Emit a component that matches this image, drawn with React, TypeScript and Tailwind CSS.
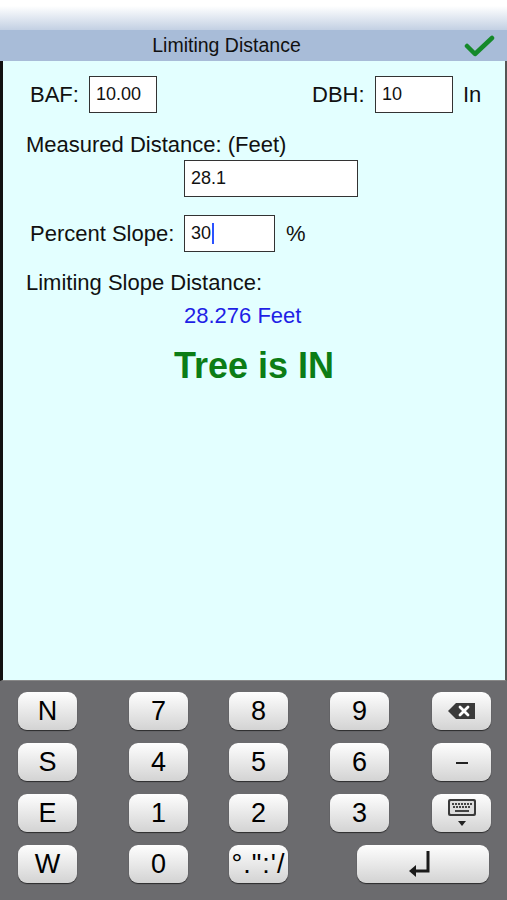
import React from "react";

const keyCls =
  "h-[38px] w-[59px] rounded-[9px] bg-[linear-gradient(#fefefe,#d3d3d3)] shadow-[0_1px_1px_rgba(0,0,0,0.6)] flex items-center justify-center text-[27px] text-black leading-none";

function Key({ children, className = "" }: { children: React.ReactNode; className?: string }) {
  return <div className={`${keyCls} ${className}`}>{children}</div>;
}

export default function App() {
  return (
    <div
      className="w-[507px] h-[900px] flex flex-col overflow-hidden"
      style={{ fontFamily: '"Liberation Sans", Arial, sans-serif' }}
    >
      {/* header */}
      <div className="h-[30px] bg-[linear-gradient(#ffffff,#ffffff_20%,#c3d0e3)]" />
      <div className="h-[31px] bg-[#a8bcd8] flex items-center justify-center pr-[54px] relative">
        <span className="text-[19.5px] text-[#111]">Limiting Distance</span>
        <svg className="absolute left-[464px] top-[5px]" width="31" height="22" viewBox="0 0 31 22">
          <polyline points="3,11 11,19 28,3" fill="none" stroke="#15892a" strokeWidth="4.5" strokeLinecap="round" strokeLinejoin="round" />
        </svg>
      </div>

      {/* content */}
      <div className="flex-1 bg-[#e3ffff] border-l-[3px] border-l-[#111] border-r-[2px] border-r-[#555] border-b border-b-[#888] flex flex-col text-[22px] text-[#111] whitespace-nowrap">
        <div className="flex items-center h-[37px] mt-[15px]">
          <span className="ml-[27px] w-[49px] shrink-0">BAF:</span>
          <div className="ml-[10px] w-[68px] h-[37px] shrink-0 bg-white border border-[#333] flex items-center pl-[6px] text-[18px]">10.00</div>
          <span className="ml-[155px] w-[53px] shrink-0">DBH:</span>
          <div className="ml-[10px] w-[78px] h-[37px] shrink-0 bg-white border border-[#333] flex items-center pl-[6px] text-[18px]">10</div>
          <span className="ml-[10px]">In</span>
        </div>
        <div className="ml-[23px] mt-[20px] leading-[24px]">Measured Distance: (Feet)</div>
        <div className="ml-[181px] mt-[3px] w-[174px] h-[37px] bg-white border border-[#333] flex items-center pl-[6px] text-[18px]">28.1</div>
        <div className="flex items-center h-[37px] mt-[18px]">
          <span className="ml-[27px] w-[142px] shrink-0">Percent Slope:</span>
          <div className="ml-[12px] w-[91px] h-[37px] shrink-0 bg-white border border-[#333] flex items-center pl-[6px] text-[18px]">
            30<span className="inline-block w-[2px] h-[21px] bg-[#2b52ff] ml-[1px]" />
          </div>
          <span className="ml-[11px]">%</span>
        </div>
        <div className="ml-[23px] mt-[19px] leading-[24px]">Limiting Slope Distance:</div>
        <div className="ml-[181px] mt-[9px] leading-[24px] text-[#1f1fe6]">28.276 Feet</div>
        <div className="ml-[171px] mt-[18px] leading-[40px] text-[36px] font-bold text-[#0c7d16]">Tree is IN</div>
      </div>

      {/* keyboard */}
      <div className="h-[219px] bg-[#6b6b6e] pt-[11px] flex flex-col gap-[13px]">
        <div className="flex">
          <Key className="ml-[18px]">N</Key>
          <Key className="ml-[52px]">7</Key>
          <Key className="ml-[41px]">8</Key>
          <Key className="ml-[42px]">9</Key>
          <Key className="ml-[43px]">
            <svg width="30" height="18" viewBox="0 0 30 18">
              <path d="M9 1 H28 V17 H9 L1 9 Z" fill="#3a3a3a" />
              <path d="M13 5 L21 13 M21 5 L13 13" stroke="#fff" strokeWidth="2.8" strokeLinecap="round" />
            </svg>
          </Key>
        </div>
        <div className="flex">
          <Key className="ml-[18px]">S</Key>
          <Key className="ml-[52px]">4</Key>
          <Key className="ml-[41px]">5</Key>
          <Key className="ml-[42px]">6</Key>
          <Key className="ml-[43px]">
            <span className="block w-[12px] h-[2px] bg-[#222] mt-[2px]" />
          </Key>
        </div>
        <div className="flex">
          <Key className="ml-[18px]">E</Key>
          <Key className="ml-[52px]">1</Key>
          <Key className="ml-[41px]">2</Key>
          <Key className="ml-[42px]">3</Key>
          <Key className="ml-[43px]">
            <svg width="32" height="30" viewBox="0 0 32 30">
              <rect x="2" y="1" width="28" height="17" rx="2" fill="#3a3a3a" />
              <rect x="4" y="3" width="24" height="13" rx="1" fill="#ddd" />
              <g fill="#444">
                <rect x="6" y="5" width="2" height="2" />
                <rect x="9" y="5" width="2" height="2" />
                <rect x="12" y="5" width="2" height="2" />
                <rect x="15" y="5" width="2" height="2" />
                <rect x="18" y="5" width="2" height="2" />
                <rect x="21" y="5" width="2" height="2" />
                <rect x="24" y="5" width="2" height="2" />
                <rect x="7" y="8" width="2" height="2" />
                <rect x="10" y="8" width="2" height="2" />
                <rect x="13" y="8" width="2" height="2" />
                <rect x="16" y="8" width="2" height="2" />
                <rect x="19" y="8" width="2" height="2" />
                <rect x="22" y="8" width="2" height="2" />
                <rect x="9" y="12" width="14" height="2" />
              </g>
              <path d="M12 23 H20 L16 28 Z" fill="#222" />
            </svg>
          </Key>
        </div>
        <div className="flex">
          <Key className="ml-[18px]">W</Key>
          <Key className="ml-[52px]">0</Key>
          <Key className="ml-[41px] text-[14px] tracking-[1px] text-[#333]">°.":'/</Key>
          <div className={`${keyCls} ml-[69px] !w-[132px]`}>
            <svg width="34" height="30" viewBox="0 0 34 30">
              <path d="M22 2 V22 H8" fill="none" stroke="#1a1a1a" strokeWidth="3" />
              <path d="M3 22 L10 16 V28 Z" fill="#1a1a1a" />
            </svg>
          </div>
        </div>
      </div>
    </div>
  );
}
